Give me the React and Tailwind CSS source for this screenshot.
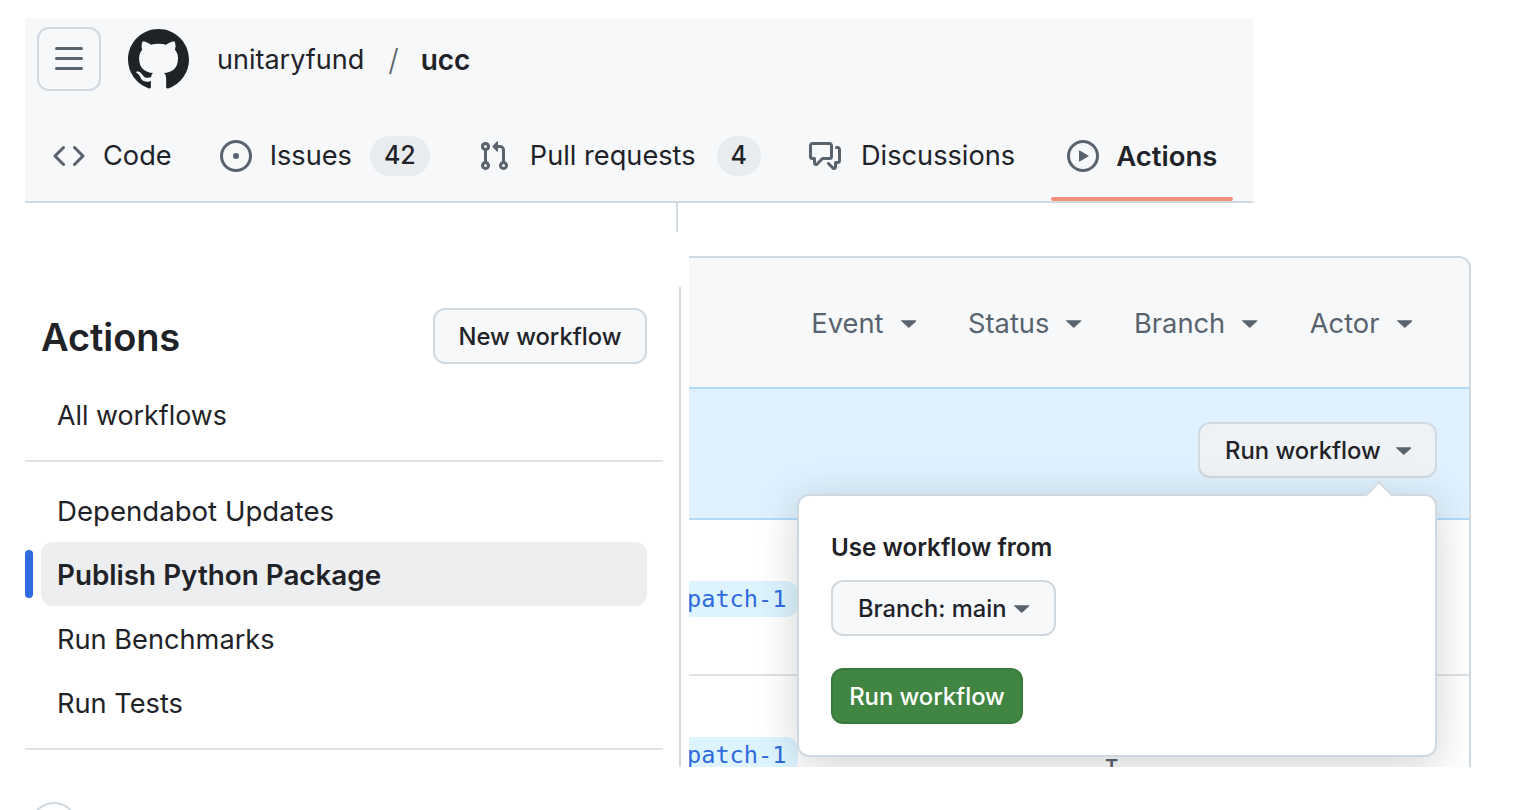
const Octicon = ({ d, className = "" }) => (
  <svg viewBox="0 0 16 16" fill="currentColor" className={className}>
    {d.map((path) => (
      <path key={path} d={path} />
    ))}
  </svg>
);

const icons = {
  bars: ["M1 2.75A.75.75 0 0 1 1.75 2h12.5a.75.75 0 0 1 0 1.5H1.75A.75.75 0 0 1 1 2.75Zm0 5A.75.75 0 0 1 1.75 7h12.5a.75.75 0 0 1 0 1.5H1.75A.75.75 0 0 1 1 7.75ZM1.75 12h12.5a.75.75 0 0 1 0 1.5H1.75a.75.75 0 0 1 0-1.5Z"],
  github: ["M8 0c4.42 0 8 3.58 8 8a8.013 8.013 0 0 1-5.45 7.59c-.4.08-.55-.17-.55-.38 0-.27.01-1.13.01-2.2 0-.75-.25-1.23-.54-1.48 1.78-.2 3.65-.88 3.65-3.95 0-.88-.31-1.59-.82-2.15.08-.2.36-1.02-.08-2.12 0 0-.67-.22-2.2.82-.64-.18-1.32-.27-2-.27-.68 0-1.36.09-2 .27-1.53-1.03-2.2-.82-2.2-.82-.44 1.1-.16 1.92-.08 2.12-.51.56-.82 1.28-.82 2.15 0 3.06 1.86 3.75 3.64 3.95-.23.2-.44.55-.51 1.07-.46.21-1.61.55-2.33-.66-.15-.24-.6-.83-1.23-.82-.67.01-.27.38.01.53.34.19.73.9.82 1.13.16.45.68 1.31 2.69.94 0 .67.01 1.3.01 1.49 0 .21-.15.45-.55.38A7.995 7.995 0 0 1 0 8c0-4.42 3.58-8 8-8Z"],
  code: ["m11.28 3.22 4.25 4.25a.75.75 0 0 1 0 1.06l-4.25 4.25a.749.749 0 0 1-1.275-.326.749.749 0 0 1 .215-.734L13.94 8l-3.72-3.72a.749.749 0 0 1 .326-1.275.749.749 0 0 1 .734.215Zm-6.56 0a.751.751 0 0 1 1.042.018.751.751 0 0 1 .018 1.042L2.06 8l3.72 3.72a.749.749 0 0 1-.326 1.275.749.749 0 0 1-.734-.215L.47 8.53a.75.75 0 0 1 0-1.06Z"],
  issue: ["M8 9.5a1.5 1.5 0 1 0 0-3 1.5 1.5 0 0 0 0 3Z", "M8 0a8 8 0 1 1 0 16A8 8 0 0 1 8 0ZM1.5 8a6.5 6.5 0 1 0 13 0 6.5 6.5 0 0 0-13 0Z"],
  pull: ["M1.5 3.25a2.25 2.25 0 1 1 3 2.122v5.256a2.251 2.251 0 1 1-1.5 0V5.372A2.25 2.25 0 0 1 1.5 3.25Zm5.677-.177L9.573.677A.25.25 0 0 1 10 .854V2.5h1A2.5 2.5 0 0 1 13.5 5v5.628a2.251 2.251 0 1 1-1.5 0V5a1 1 0 0 0-1-1h-1v1.646a.25.25 0 0 1-.427.177L7.177 3.427a.25.25 0 0 1 0-.354ZM3.75 2.5a.75.75 0 1 0 0 1.5.75.75 0 0 0 0-1.5Zm0 9.5a.75.75 0 1 0 0 1.5.75.75 0 0 0 0-1.5Zm8.25.75a.75.75 0 1 0 1.5 0 .75.75 0 0 0-1.5 0Z"],
  discussion: ["M1.75 1h8.5c.966 0 1.75.784 1.75 1.75v5.5A1.75 1.75 0 0 1 10.25 10H7.061l-2.574 2.573A1.458 1.458 0 0 1 2 11.543V10h-.25A1.75 1.75 0 0 1 0 8.25v-5.5C0 1.784.784 1 1.75 1ZM1.5 2.75v5.5c0 .138.112.25.25.25h1a.75.75 0 0 1 .75.75v2.19l2.72-2.72a.749.749 0 0 1 .53-.22h3.5a.25.25 0 0 0 .25-.25v-5.5a.25.25 0 0 0-.25-.25h-8.5a.25.25 0 0 0-.25.25Zm13 2a.25.25 0 0 0-.25-.25h-.5a.75.75 0 0 1 0-1.5h.5c.966 0 1.75.784 1.75 1.75v5.5A1.75 1.75 0 0 1 14.25 12H14v1.543a1.458 1.458 0 0 1-2.487 1.03L9.22 12.28a.749.749 0 0 1 .326-1.275.749.749 0 0 1 .734.215l2.22 2.22v-2.19a.75.75 0 0 1 .75-.75h1a.25.25 0 0 0 .25-.25Z"],
  play: ["M8 0a8 8 0 1 1 0 16A8 8 0 0 1 8 0ZM1.5 8a6.5 6.5 0 1 0 13 0 6.5 6.5 0 0 0-13 0Zm4.879-2.773 4.264 2.559a.25.25 0 0 1 0 .428l-4.264 2.559A.25.25 0 0 1 6 10.559V5.442a.25.25 0 0 1 .379-.215Z"],
};

const Caret = () => (
  <svg viewBox="0 0 16 8" fill="#59636e" className="block w-[15.5px] h-[8px] shrink-0">
    <path d="M0.6 0h14.8a.6.6 0 0 1 .42 1.02L8 8 .18 1.02A.6.6 0 0 1 .6 0Z" />
  </svg>
);

const Counter = ({ children, className = "" }) => (
  <span className={`h-[40px] px-[14px] flex items-center rounded-full bg-[#e9ecef] text-[25px] font-medium ${className}`}>
    {children}
  </span>
);

const Tab = ({ icon, label, active, counter, labelClass = "ml-[18px]", counterClass = "ml-[18px]", className = "" }) => (
  <div className={`relative h-[90px] px-[16px] flex items-center ${className}`}>
    <Octicon d={icons[icon]} className="w-[32px] h-[32px] text-[#59636e]" />
    <span className={`mt-[1px] ${labelClass} ${active ? "text-[27.5px] font-semibold" : "text-[27.2px]"}`}>{label}</span>
    {counter && <Counter className={counterClass}>{counter}</Counter>}
    {active && <span className="absolute left-0 right-0 bottom-0 h-[4px] rounded-full bg-[#f48f7a]" />}
  </div>
);

const SideItem = ({ label, active, size = "text-[27.2px] pt-[4px]" }) => (
  <div className="flex items-center">
    <span className={`w-[8px] h-[48px] rounded-full ${active ? "bg-[#2f6bdc]" : ""}`} />
    <div className={`ml-[8px] w-[606px] h-[64px] pl-[16px] flex items-center rounded-[12px] ${active ? "bg-[#eceef0] font-semibold text-[27.8px] pt-[3px]" : size}`}>
      {label}
    </div>
  </div>
);

const Filter = ({ label }) => (
  <div className="flex items-center gap-[17px] text-[27.3px] text-[#59636e]">
    {label}
    <Caret />
  </div>
);

const PatchPill = () => (
  <span className="block w-[109px] h-[36px] rounded-r-[12px] bg-[#ddf4ff] text-[#2f6bdc] text-[23.6px] leading-[36px] indent-[-2px] overflow-hidden whitespace-nowrap font-['DejaVu_Sans_Mono',monospace]">
    patch-1
  </span>
);

export default function App() {
  return (
    <div className="w-[1520px] h-[810px] overflow-hidden bg-white pt-[18px] text-[#1f2328] font-['Inter',sans-serif]">
      {/* Repo header */}
      <header className="ml-[25px] w-[1228px] h-[185px] bg-[#f6f8fa] border-b-2 border-[#d1d9e0] pt-[9px] pl-[12px]">
        <div className="flex items-center h-[64px]">
          <button className="w-[64px] h-[64px] flex items-center justify-center rounded-[12px] border-2 border-[#d1d9e0] text-[#59636e]">
            <Octicon d={icons.bars} className="w-[32px] h-[32px]" />
          </button>
          <Octicon d={icons.github} className="ml-[27px] w-[61px] h-[61px]" />
          <span className="ml-[28px] mt-[2px] text-[27px]">unitaryfund</span>
          <span className="ml-[24px] mt-[2px] text-[30px] font-light text-[#59636e]">/</span>
          <span className="ml-[22px] mt-[2px] text-[28px] font-semibold">ucc</span>
        </div>
        <nav className="flex mt-[20px]">
          <Tab icon="code" label="Code" />
          <Tab icon="issue" label="Issues" counter="42" className="ml-[16px]" />
          <Tab icon="pull" label="Pull requests" counter="4" labelClass="ml-[20px]" counterClass="ml-[21px]" className="ml-[16px]" />
          <Tab icon="discussion" label="Discussions" labelClass="ml-[20px]" className="ml-[16px]" />
          <Tab icon="play" label="Actions" labelClass="ml-[17px]" active className="ml-[20px]" />
        </nav>
      </header>

      <div className="flex">
        {/* Workflow sidebar */}
        <aside className="ml-[25px] w-[638px] shrink-0">
          <div className="mt-[105px] h-[56px] pl-[16px] w-[622px] flex items-center justify-between">
            <h1 className="mt-[2px] text-[38px] font-semibold tracking-[-0.1px]">Actions</h1>
            <button className="w-[214px] h-[56px] pt-[2px] rounded-[12px] border-2 border-[#d1d9e0] bg-[#f6f8fa] text-[23.8px] font-[450]">
              New workflow
            </button>
          </div>
          <div className="mt-[19px]">
            <SideItem label="All workflows" size="text-[26.8px]" />
          </div>
          <div className="mt-[13px] h-[2px] bg-[#dfe3e8]" />
          <div className="mt-[16px]">
            <SideItem label="Dependabot Updates" size="text-[27.6px] pt-[3px]" />
            <SideItem label="Publish Python Package" active />
            <SideItem label="Run Benchmarks" />
            <SideItem label="Run Tests" />
          </div>
          <div className="mt-[14px] h-[2px] bg-[#dfe3e8]" />
          <div className="mt-[52px] ml-[5px] w-[48px] h-[48px] rounded-full border-2 border-[#d1d9e0]" />
        </aside>

        <div className="w-[26px] shrink-0 pl-[13px]">
          <div className="w-[2px] h-[29px] bg-[#d1d9e0]" />
          <div className="mt-[55px] ml-[3px] w-[2px] h-[480px] bg-[#d1d9e0]" />
        </div>

        {/* Runs panel */}
        <section className="relative mt-[53px] w-[782px] h-[511px] overflow-hidden rounded-tr-[12px] border-t-2 border-r-2 border-[#d1d9e0]">
          <div className="h-[129px] pt-[3px] bg-[#f6f8fa] flex items-center justify-end gap-[52px] pr-[57px]">
            <Filter label="Event" />
            <Filter label="Status" />
            <Filter label="Branch" />
            <Filter label="Actor" />
          </div>
          <div className="h-[133px] bg-[#dff1fe] border-y-2 border-[#b4dafa] flex items-center justify-end pr-[32px] pb-[7px]">
            <button className="w-[239px] h-[56px] pl-[25px] pt-[2px] flex items-center gap-[15px] rounded-[12px] border-2 border-[#d1d9e0] bg-[#eff2f5] text-[23.8px] font-[450]">
              Run workflow
              <Caret />
            </button>
          </div>
          <div className="h-[156px] border-b-2 border-[#dfe3e8] pt-[61px]">
            <PatchPill />
          </div>
          <div className="flex pt-[61px]">
            <PatchPill />
            <span className="ml-[307px] mt-[20px] text-[20px] leading-[20px] font-semibold text-[#59636e]">T</span>
          </div>

          {/* Run workflow popover */}
          <div className="absolute left-[108px] top-[236px] w-[640px] h-[263px] rounded-[12px] border-2 border-[#d1d9e0] bg-white pl-[32px] pt-[37px] shadow-[0_8px_40px_rgba(31,35,40,0.2)]">
            <span className="absolute -top-[11px] right-[46px] w-[20px] h-[20px] rotate-45 border-l-2 border-t-2 border-[#d1d9e0] bg-white" />
            <p className="text-[24.2px] leading-[30px] font-semibold">Use workflow from</p>
            <button className="mt-[17px] w-[225px] h-[56px] pl-[25px] pt-[2px] flex items-center gap-[8px] rounded-[12px] border-2 border-[#d1d9e0] bg-[#f6f8fa] text-[23.7px] font-[450]">
              Branch: main
              <Caret />
            </button>
            <button className="mt-[32px] block w-[192px] h-[56px] pt-[2px] rounded-[12px] bg-[#418543] border-2 border-[#3b7a3d] text-white text-[23.8px] font-medium">
              Run workflow
            </button>
          </div>
        </section>
      </div>
    </div>
  );
}
